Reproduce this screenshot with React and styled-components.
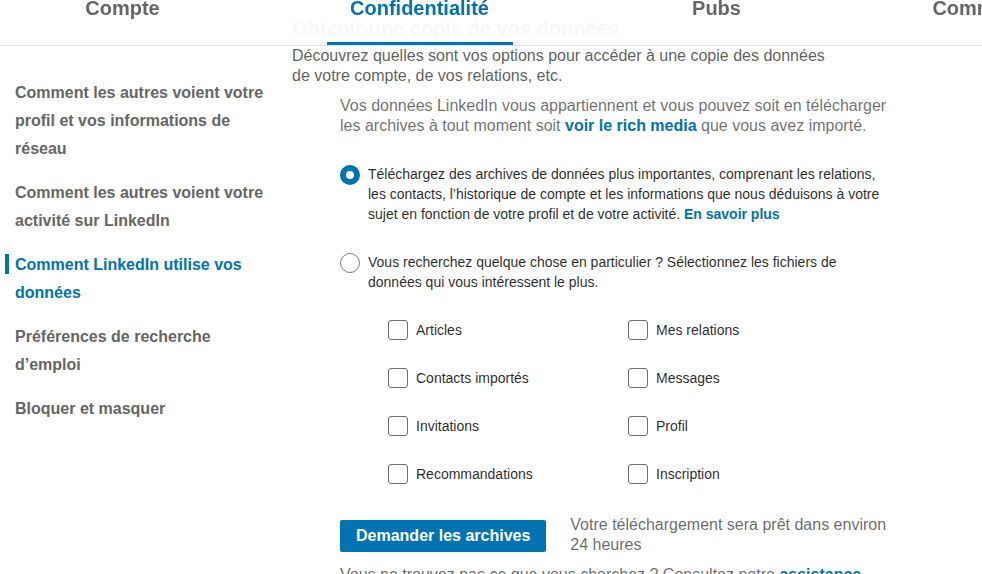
import React from "react";
import styled, { createGlobalStyle } from "styled-components";

const BLUE = "#0073b1";

const GlobalStyle = createGlobalStyle`
  html, body {
    margin: 0;
    padding: 0;
    background: #fff;
    font-family: "Liberation Sans", Arial, sans-serif;
    overflow: hidden;
  }
  * {
    box-sizing: border-box;
  }
`;

const tabs = ["Compte", "Confidentialité", "Pubs", "Communications"];

const navItems = [
  "Comment les autres voient votre profil et vos informations de réseau",
  "Comment les autres voient votre activité sur LinkedIn",
  "Comment LinkedIn utilise vos données",
  "Préférences de recherche d’emploi",
  "Bloquer et masquer",
];

const files = [
  "Articles",
  "Mes relations",
  "Contacts importés",
  "Messages",
  "Invitations",
  "Profil",
  "Recommandations",
  "Inscription",
];

const App = () => {
  return (
    <>
      <GlobalStyle />
      <TopBar>
        <Tabs>
          {tabs.map((t) => (
            <Tab key={t} active={t === "Confidentialité"}>
              <TabLabel>{t}</TabLabel>
            </Tab>
          ))}
        </Tabs>
      </TopBar>
      <Layout>
        <Sidebar>
          {navItems.map((item, i) => (
            <NavItem key={item} active={i === 2}>
              {item}
            </NavItem>
          ))}
        </Sidebar>
        <Main>
          <Title>Obtenir une copie de vos données</Title>
          <Intro>
            Découvrez quelles sont vos options pour accéder à une copie des
            données de votre compte, de vos relations, etc.
          </Intro>
          <Section>
            <Para>
              Vos données LinkedIn vous appartiennent et vous pouvez soit en
              télécharger les archives à tout moment soit{" "}
              <Link>voir le rich media</Link> que vous avez importé.
            </Para>
            <RadioRow gap={28}>
              <Radio checked />
              <RadioText>
                Téléchargez des archives de données plus importantes,
                comprenant les relations, les contacts, l’historique de compte
                et les informations que nous déduisons à votre sujet en
                fonction de votre profil et de votre activité.{" "}
                <Link>En savoir plus</Link>
              </RadioText>
            </RadioRow>
            <RadioRow gap={28}>
              <Radio />
              <RadioText>
                Vous recherchez quelque chose en particulier ? Sélectionnez les
                fichiers de données qui vous intéressent le plus.
              </RadioText>
            </RadioRow>
            <CheckGrid>
              {files.map((f) => (
                <CheckItem key={f}>
                  <CheckBox />
                  <span>{f}</span>
                </CheckItem>
              ))}
            </CheckGrid>
            <ActionRow>
              <RequestButton>Demander les archives</RequestButton>
              <ActionNote>
                Votre téléchargement sera prêt dans environ 24 heures
              </ActionNote>
            </ActionRow>
            <Footnote>
              Vous ne trouvez pas ce que vous cherchez ? Consultez notre{" "}
              <Link>assistance</Link>
            </Footnote>
          </Section>
        </Main>
      </Layout>
    </>
  );
};

const TopBar = styled.header`
  position: fixed;
  top: 0;
  left: 0;
  right: 0;
  height: 46px;
  background: rgba(255, 255, 255, 0.965);
  border-bottom: 1px solid #e3e3e3;
  z-index: 10;
  overflow: hidden;
`;

const Tabs = styled.nav`
  display: flex;
  margin-left: -26px;
  height: 100%;
`;

const Tab = styled.div`
  position: relative;
  flex: 0 0 297px;
  text-align: center;
  font-size: 20px;
  font-weight: 700;
  color: ${({ active }) => (active ? BLUE : "#666")};
  &::after {
    content: "";
    display: ${({ active }) => (active ? "block" : "none")};
    position: absolute;
    left: 50%;
    bottom: -1px;
    width: 186px;
    height: 4px;
    transform: translateX(-50%);
    background: ${BLUE};
  }
`;

const TabLabel = styled.div`
  line-height: 20px;
  margin-top: -2px;
  white-space: nowrap;
`;

const Layout = styled.div`
  display: flex;
  align-items: flex-start;
`;

const Sidebar = styled.aside`
  flex: 0 0 292px;
  padding: 79px 17px 0 15px;
`;

const NavItem = styled.div`
  position: relative;
  font-size: 16px;
  font-weight: 700;
  line-height: 28px;
  margin-bottom: 16px;
  color: ${({ active }) => (active ? BLUE : "#666")};
  &::before {
    content: "";
    display: ${({ active }) => (active ? "block" : "none")};
    position: absolute;
    left: -10px;
    top: 3px;
    width: 4px;
    height: 20px;
    background: ${BLUE};
  }
`;

const Main = styled.main`
  flex: 0 0 598px;
`;

const Title = styled.h2`
  margin: 16px 0 0;
  font-size: 20px;
  line-height: 24px;
  font-weight: 700;
  color: rgba(0, 0, 0, 0.9);
`;

const Intro = styled.p`
  margin: 6px 0 0;
  max-width: 550px;
  font-size: 16px;
  line-height: 20px;
  color: rgba(0, 0, 0, 0.65);
`;

const Section = styled.section`
  padding-left: 48px;
`;

const Para = styled.p`
  margin: 10px 0 0;
  font-size: 16px;
  line-height: 20px;
  color: rgba(0, 0, 0, 0.58);
`;

const Link = styled.a`
  color: ${BLUE};
  font-weight: 700;
  cursor: pointer;
`;

const RadioRow = styled.div`
  display: flex;
  align-items: flex-start;
  gap: 8px;
  margin-top: ${({ gap }) => gap}px;
`;

const Radio = styled.span`
  flex: 0 0 20px;
  width: 20px;
  height: 20px;
  margin-top: 1px;
  border-radius: 50%;
  background: #fff;
  border: ${({ checked }) =>
    checked ? `6px solid ${BLUE}` : "1.5px solid #808080"};
`;

const RadioText = styled.div`
  font-size: 14px;
  line-height: 20px;
  color: rgba(0, 0, 0, 0.85);
`;

const CheckGrid = styled.div`
  display: grid;
  grid-template-columns: 240px 240px;
  row-gap: 28px;
  margin: 28px 0 0 48px;
`;

const CheckItem = styled.label`
  display: flex;
  align-items: center;
  gap: 8px;
  height: 20px;
  font-size: 14px;
  color: rgba(0, 0, 0, 0.85);
`;

const CheckBox = styled.span`
  flex: 0 0 20px;
  width: 20px;
  height: 20px;
  border: 1.5px solid #707070;
  border-radius: 3px;
  background: #fff;
`;

const ActionRow = styled.div`
  display: flex;
  align-items: flex-start;
  gap: 24px;
  margin-top: 31px;
`;

const RequestButton = styled.button`
  flex: 0 0 auto;
  margin-top: 5px;
  height: 32px;
  padding: 0 16px;
  border: none;
  border-radius: 2px;
  background: ${BLUE};
  color: #fff;
  font-family: inherit;
  font-size: 16px;
  font-weight: 700;
`;

const ActionNote = styled.div`
  font-size: 16px;
  line-height: 20px;
  color: rgba(0, 0, 0, 0.6);
`;

const Footnote = styled.p`
  margin: 10px 0 0;
  font-size: 16px;
  line-height: 20px;
  color: rgba(0, 0, 0, 0.6);
`;

export default App;
